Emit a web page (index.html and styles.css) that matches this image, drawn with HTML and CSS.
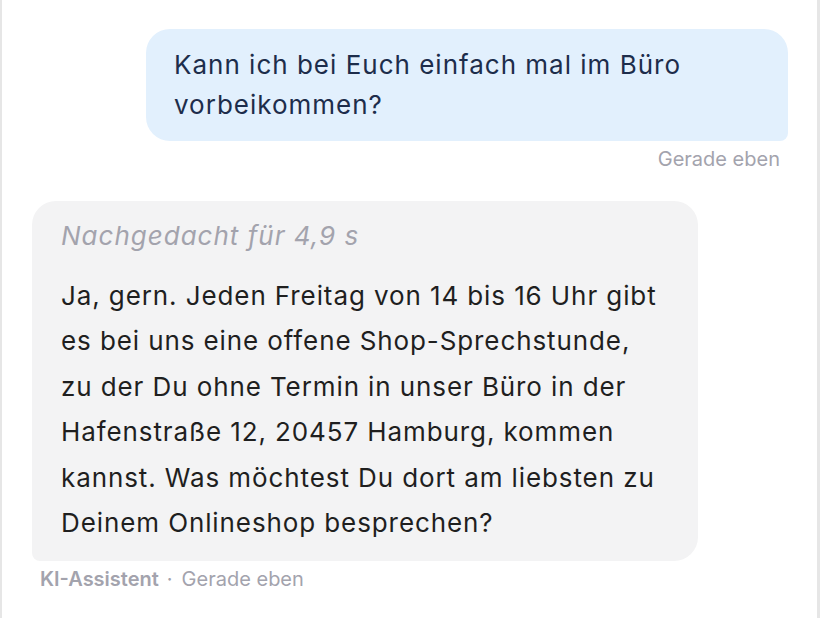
FILE: index.html
```html
<!DOCTYPE html>
<html lang="de">
<head>
<meta charset="utf-8">
<link rel="stylesheet" href="styles.css">
</head>
<body>
<div class="chat">
  <div class="msg msg-user">
    <div class="bubble bubble-user">Kann ich bei Euch einfach mal im Büro vorbeikommen?</div>
    <div class="meta meta-user">Gerade eben</div>
  </div>
  <div class="msg msg-bot">
    <div class="bubble bubble-bot">
      <div class="thought">Nachgedacht für 4,9 s</div>
      <div class="answer">Ja, gern. Jeden Freitag von 14 bis 16 Uhr gibt es bei uns eine offene Shop-Sprechstunde, zu der Du ohne Termin in unser Büro in der Hafenstraße 12, 20457 Hamburg, kommen kannst. Was möchtest Du dort am liebsten zu Deinem Onlineshop besprechen?</div>
    </div>
    <div class="meta meta-bot"><span class="author">KI-Assistent</span><span class="sep">·</span>Gerade eben</div>
  </div>
</div>
</body>
</html>
```

FILE: styles.css
```css
html, body {
  margin: 0;
  padding: 0;
  background: #ffffff;
}
body {
  font-family: Inter, "Noto Sans", sans-serif;
}
.chat {
  box-sizing: border-box;
  width: 820px;
  height: 618px;
  border-left: 2px solid #e6e6e6;
  border-right: 3px solid #e6e6e6;
  padding: 29px 29px 0 30px;
  display: flex;
  flex-direction: column;
}
.msg {
  display: flex;
  flex-direction: column;
}
.msg-user {
  align-items: flex-end;
}
.msg-bot {
  align-items: flex-start;
  margin-top: 30px;
}
.bubble {
  box-sizing: border-box;
}
.bubble-user {
  width: 642px;
  background: #e2f0fd;
  color: #1d2d4b;
  font-size: 26px;
  letter-spacing: 1px;
  line-height: 40px;
  padding: 16px 28px;
  border-radius: 24px 24px 8px 24px;
}
.meta {
  color: #a3a3ad;
  font-size: 20px;
  line-height: 24px;
}
.meta-user {
  margin-top: 6px;
  margin-right: 8px;
}
.bubble-bot {
  width: 666px;
  background: #f3f3f4;
  color: #1f1f1f;
  padding: 20px 36px 16px 29px;
  border-radius: 24px 24px 24px 8px;
}
.thought {
  font-style: italic;
  color: #a3a3ad;
  font-size: 26px;
  letter-spacing: 1px;
  line-height: 30px;
}
.answer {
  margin-top: 22px;
  font-size: 26px;
  letter-spacing: 0.9px;
  line-height: 45.4px;
}
.meta-bot {
  margin-top: 6px;
  margin-left: 8px;
}
.author {
  font-weight: 600;
}
.sep {
  margin: 0 9px 0 8px;
}
```
